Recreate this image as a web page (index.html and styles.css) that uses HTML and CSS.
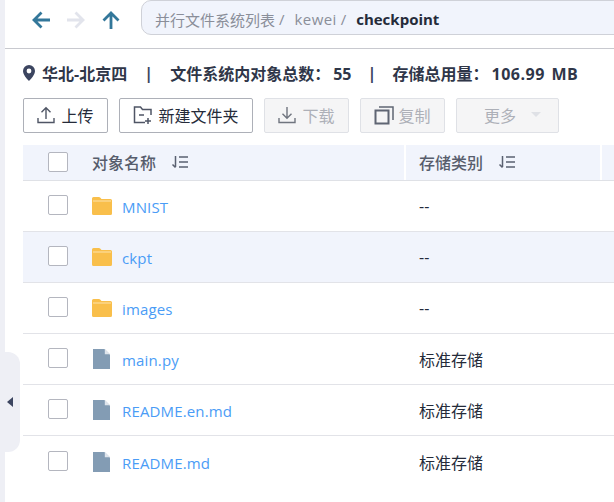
FILE: index.html
```html
<!DOCTYPE html>
<html lang="zh">
<head>
<meta charset="utf-8">
<title>checkpoint</title>
<link rel="stylesheet" href="styles.css">
</head>
<body>
<div class="page">
  <aside class="rail"></aside>
  <button class="handle" aria-label="收起"><span class="handle-arrow"></span></button>
  <main class="content">
    <header class="topbar">
      <div class="nav">
        <svg class="nav-icon" viewBox="0 0 18 18"><path d="M18 9H2M9.500 1.500 2 9l7.500 7.500" fill="none" stroke="#33779a" stroke-width="2.800"/></svg>
        <svg class="nav-icon" viewBox="0 0 18 18"><path d="M0 9h16M8.500 1.500 16 9l-7.500 7.500" fill="none" stroke="#e2e4ec" stroke-width="2.800"/></svg>
        <svg class="nav-icon" viewBox="0 0 18 18"><path d="M9 18V2M1.500 9.500 9 2l7.500 7.500" fill="none" stroke="#33779a" stroke-width="2.800"/></svg>
      </div>
      <nav class="crumbs">
        <span>并行文件系统列表</span><span class="sep">/</span><span class="crumb-latin">kewei</span><span class="sep">/</span><span class="crumb-current">checkpoint</span>
      </nav>
    </header>
    <section class="body">
      <div class="stats">
        <svg class="pin" viewBox="0 0 12 16"><path fill-rule="evenodd" d="M6 0a6 6 0 0 1 6 6c0 3.600-3.600 7.600-6 10C3.600 13.600 0 9.600 0 6a6 6 0 0 1 6-6zm0 3.600a2.400 2.400 0 1 0 0 4.800 2.400 2.400 0 0 0 0-4.800z" fill="#3c4560"/></svg>
        <span>华北-北京四</span><span class="stat-sep">|</span><span>文件系统内对象总数：<span class="stat-num">55</span></span><span class="stat-sep stat-sep-tight">|</span><span>存储总用量：<span class="stat-num stat-size">106.99 MB</span></span>
      </div>
      <div class="toolbar">
        <button class="btn btn-upload">
          <svg class="btn-icon" viewBox="0 0 18 18"><path d="M9 13V2M4.500 6.200 9 1.700l4.500 4.500M1 12v4.500h16V12" fill="none" stroke="#4f5565" stroke-width="1.400"/></svg>上传
        </button>
        <button class="btn btn-folder">
          <svg class="btn-icon-lg" viewBox="0 0 20 20"><path d="M12 17.500H1.500V2h6l2 2.500h8.500V10M6 10h5M15 13v6M12 16h6" fill="none" stroke="#4f5565" stroke-width="1.500"/></svg>新建文件夹
        </button>
        <button class="btn btn-off btn-download">
          <svg class="btn-icon" viewBox="0 0 18 18"><path d="M9 1v11M4.500 7.800 9 12.300l4.500-4.500M1 12v4.500h16V12" fill="none" stroke="#70757f" stroke-width="1.400"/></svg>下载
        </button>
        <button class="btn btn-off btn-copy">
          <svg class="btn-icon-lg" viewBox="0 0 20 20"><path d="M1.500 5.500h13v13h-13z" fill="none" stroke="#5f6573" stroke-width="2"/><path d="M5 2h14v13" fill="none" stroke="#5f6573" stroke-width="1.500"/></svg>复制
        </button>
        <button class="btn btn-off btn-more">更多<span class="caret"></span></button>
      </div>
      <div class="table">
        <div class="row head">
          <div class="cell-check"><span class="check"></span></div>
          <div class="cell-name head-cell">对象名称
            <svg class="sort" viewBox="0 0 18 14"><path d="M4.500 1v11M1.500 9.500l3 3M8 2h9M8 7h9M8 12h9" fill="none" stroke="#5a6070" stroke-width="1.500"/></svg>
          </div>
          <div class="cell-type head-cell">存储类别
            <svg class="sort" viewBox="0 0 18 14"><path d="M4.500 1v11M1.500 9.500l3 3M8 2h9M8 7h9M8 12h9" fill="none" stroke="#5a6070" stroke-width="1.500"/></svg>
          </div>
          <div class="cell-rest"></div>
        </div>
        <div class="row">
          <div class="cell-check"><span class="check"></span></div>
          <div class="cell-name"><svg class="folder" viewBox="0 0 20 18"><path d="M1.500 0h5.300c.7 0 1.200.3 1.600.8L9.500 2h9A1.500 1.500 0 0 1 20 3.500V16.500a1.500 1.500 0 0 1-1.500 1.500H1.500A1.500 1.500 0 0 1 0 16.500v-15A1.500 1.500 0 0 1 1.500 0z" fill="#f9bf4b"/><path d="M1 4h18" stroke="#fde3ac" stroke-width="1"/></svg><a class="link">MNIST</a></div>
          <div class="cell-type">--</div>
        </div>
        <div class="row hover">
          <div class="cell-check"><span class="check"></span></div>
          <div class="cell-name"><svg class="folder" viewBox="0 0 20 18"><path d="M1.500 0h5.300c.7 0 1.200.3 1.600.8L9.500 2h9A1.500 1.500 0 0 1 20 3.500V16.500a1.500 1.500 0 0 1-1.500 1.500H1.500A1.500 1.500 0 0 1 0 16.500v-15A1.500 1.500 0 0 1 1.500 0z" fill="#f9bf4b"/><path d="M1 4h18" stroke="#fde3ac" stroke-width="1"/></svg><a class="link">ckpt</a></div>
          <div class="cell-type">--</div>
        </div>
        <div class="row">
          <div class="cell-check"><span class="check"></span></div>
          <div class="cell-name"><svg class="folder" viewBox="0 0 20 18"><path d="M1.500 0h5.300c.7 0 1.200.3 1.600.8L9.500 2h9A1.500 1.500 0 0 1 20 3.500V16.500a1.500 1.500 0 0 1-1.500 1.500H1.500A1.500 1.500 0 0 1 0 16.500v-15A1.500 1.500 0 0 1 1.500 0z" fill="#f9bf4b"/><path d="M1 4h18" stroke="#fde3ac" stroke-width="1"/></svg><a class="link">images</a></div>
          <div class="cell-type">--</div>
        </div>
        <div class="row">
          <div class="cell-check"><span class="check"></span></div>
          <div class="cell-name"><svg class="file" viewBox="0 0 17 20"><path d="M0 0h11.500L17 5.500V20H0z" fill="#839cb4"/><path d="M11.800 0 17 5.200h-5.200z" fill="#dfe5ec"/></svg><a class="link">main.py</a></div>
          <div class="cell-type">标准存储</div>
        </div>
        <div class="row">
          <div class="cell-check"><span class="check"></span></div>
          <div class="cell-name"><svg class="file" viewBox="0 0 17 20"><path d="M0 0h11.500L17 5.500V20H0z" fill="#839cb4"/><path d="M11.800 0 17 5.200h-5.200z" fill="#dfe5ec"/></svg><a class="link">README.en.md</a></div>
          <div class="cell-type">标准存储</div>
        </div>
        <div class="row last">
          <div class="cell-check"><span class="check"></span></div>
          <div class="cell-name"><svg class="file" viewBox="0 0 17 20"><path d="M0 0h11.500L17 5.500V20H0z" fill="#839cb4"/><path d="M11.800 0 17 5.200h-5.200z" fill="#dfe5ec"/></svg><a class="link">README.md</a></div>
          <div class="cell-type">标准存储</div>
        </div>
      </div>
    </section>
  </main>
</div>
</body>
</html>
```
FILE: styles.css
```css
* { box-sizing: border-box; }
html, body { margin: 0; height: 100%; overflow: hidden; background: #fff; }
body { font-family: "Open Sans", "Noto Sans CJK SC", sans-serif; color: #252b3a; }
.page { display: flex; width: 614px; height: 502px; position: relative; overflow: hidden; }
.rail { width: 5px; flex: none; background: #eeeff5; }
.handle { position: absolute; left: 0; top: 352px; width: 20px; height: 100px; border: 0; padding: 0; background: #eeeff5; border-radius: 0 12px 12px 0; display: flex; align-items: center; }
.handle-arrow { margin-left: 7px; width: 0; height: 0; border-style: solid; border-width: 5px 6px 5px 0; border-color: transparent #3c4560 transparent transparent; }
.content { flex: 1; min-width: 0; display: flex; flex-direction: column; }
.topbar { height: 49px; flex: none; display: flex; align-items: flex-start; border-bottom: 1px solid #c8c9cf; }
.nav { display: flex; gap: 17px; padding: 11px 0 0 27px; width: 136px; flex: none; }
.nav-icon { width: 18px; height: 18px; flex: none; }
.crumbs { flex: 1; height: 35px; margin-right: -20px; display: flex; align-items: center; padding: 3px 0 0 13px; background: #f1f4fc; border: 1px solid #cfd1d8; border-radius: 10px 0 0 10px; font-size: 15px; color: #8a8e99; }
.sep { color: #8a8e99; margin: 0 10px 0 4px; }
.crumb-latin { letter-spacing: .4px; }
.crumb-current { color: #252b3a; font-weight: 700; }
.body { flex: 1; padding: 0 0 0 18px; min-width: 0; }
.stats { display: flex; align-items: center; height: 20px; margin-top: 14px; font-size: 16px; font-weight: 700; color: #2f3648; white-space: pre; }
.pin { width: 12px; height: 16px; flex: none; margin-right: 7px; }
.stat-sep { width: 43px; text-align: center; flex: none; color: #3c4560; }
.stat-sep-tight { width: 41px; }
.stat-num { margin-left: 3px; }
.stat-size { letter-spacing: .5px; word-spacing: 2px; }
.toolbar { display: flex; gap: 11px; margin-top: 15px; }
.btn { height: 35px; padding: 0 0 2px; border: 1px solid #adb0b8; border-radius: 2px; background: #fff; font: inherit; font-size: 16px; color: #252b3a; display: flex; align-items: center; justify-content: center; gap: 6px; }
.btn-upload { width: 85px; }
.btn-folder { width: 134px; gap: 5px; }
.btn-off { background: #f5f5f6; border-color: #dfe1e6; color: #adb0b8; }
.btn-download { width: 85px; }
.btn-copy { width: 85px; gap: 4px; }
.btn-more { width: 103px; gap: 15px; padding-left: 10px; }
.btn-icon { width: 18px; height: 18px; flex: none; }
.btn-icon-lg { width: 20px; height: 20px; flex: none; }
.caret { width: 0; height: 0; border-style: solid; border-width: 5px 5px 0; border-color: #dfe1e6 transparent transparent; }
.table { margin-top: 12px; }
.row { display: flex; align-items: center; height: 51px; border-bottom: 1px solid #e2e3e8; font-size: 16px; color: #252b3a; }
.row.last { border-bottom: 0; }
.row.hover { background: #f1f4fc; }
.row.head { height: 36px; background: #f1f4fc; border-bottom: 1px solid #dfe1e6; font-weight: 500; color: #575d6c; }
.cell-check { width: 69px; flex: none; padding-left: 25px; display: flex; margin-top: -2px; }
.head .cell-check { margin-top: -1px; }
.check { width: 20px; height: 20px; display: block; background: #fff; border: 1px solid #b4b6bf; border-radius: 2px; }
.cell-name { width: 314px; flex: none; display: flex; align-items: center; }
.cell-type { flex: 1; padding-left: 13px; }
.head-cell { height: 100%; gap: 15px; display: flex; align-items: center; padding-bottom: 2px; }
.head .cell-name { width: 314px; border-right: 2px solid #fff; }
.head .cell-type { flex: none; width: 196px; border-right: 2px solid #fff; }
.sort { width: 18px; height: 14px; flex: none; }
.cell-rest { flex: 1; }
.folder { width: 20px; height: 18px; flex: none; margin-right: 10px; }
.file { width: 17px; height: 20px; flex: none; margin-right: 12px; margin-left: 1px; }
.link { font-size: 15px; color: #4a9cf6; letter-spacing: .15px; padding-top: 2px; }
```
